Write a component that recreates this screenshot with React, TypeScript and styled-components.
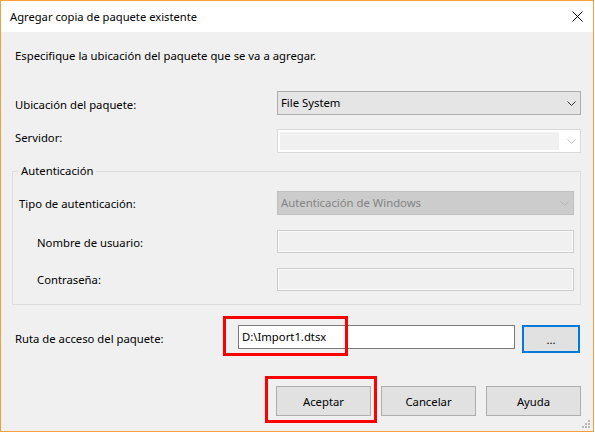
import React from "react";
import styled, { createGlobalStyle } from "styled-components";

const GlobalStyle = createGlobalStyle`
  html, body { margin: 0; padding: 0; background: #ffffff; }
  body { font-family: "Segoe UI", "Noto Sans", "Open Sans", sans-serif; font-size: 11.3px; color: #000; }
  * { box-sizing: border-box; }
`;

const Window = styled.div`
  position: relative;
  width: 594px;
  height: 432px;
  border: 1px solid #f5a038;
  display: flex;
  flex-direction: column;
  background: #f0f0f0;
`;

const TitleBar = styled.div`
  height: 31px;
  background: #ffffff;
  display: flex;
  align-items: center;
  justify-content: space-between;
  padding: 0 10px 0 9px;
  flex-shrink: 0;
`;

const Title = styled.span`
  font-size: 11.2px;
  line-height: 16px;
  margin-top: 1px;
`;

const CloseIcon = styled.svg`
  width: 11px;
  height: 11px;
`;

const Body = styled.div`
  flex: 1;
  display: flex;
  flex-direction: column;
  padding: 16px 12px 0 14px;
`;

const Instruction = styled.div`
  line-height: 16px;
  height: 16px;
  margin-bottom: 27px;
`;

const Row = styled.div<{ $gap?: number; $indent?: number; $align?: string }>`
  display: flex;
  align-items: ${(p) => p.$align || "center"};
  margin-bottom: ${(p) => p.$gap ?? 0}px;
  padding-left: ${(p) => p.$indent ?? 0}px;
`;

const Label = styled.div<{ $w: number; $top?: number }>`
  width: ${(p) => p.$w}px;
  flex-shrink: 0;
  line-height: 16px;
  margin-top: ${(p) => p.$top ?? 0}px;
`;

const Combo = styled.div<{ $variant: "normal" | "empty" | "disabled"; $w: number }>`
  width: ${(p) => p.$w}px;
  height: 24px;
  display: flex;
  align-items: center;
  justify-content: space-between;
  padding: ${(p) => (p.$variant === "empty" ? "2px 4px 2px 2px" : "0 4px 0 3px")};
  line-height: 16px;
  border: 1px solid
    ${(p) => (p.$variant === "normal" ? "#adadad" : p.$variant === "empty" ? "#d9d9d9" : "#bfbfbf")};
  background: ${(p) => (p.$variant === "normal" ? "#e5e5e5" : p.$variant === "empty" ? "#ffffff" : "#cccccc")};
  color: ${(p) => (p.$variant === "disabled" ? "#838383" : "#000000")};
`;

const ComboEdit = styled.div`
  flex: 1;
  align-self: stretch;
  background: #f0f0f0;
  margin-right: 8px;
`;

const Chevron = styled.svg`
  width: 9px;
  height: 5px;
  flex-shrink: 0;
`;

const Group = styled.fieldset`
  margin: 10px 0 20px -3px;
  padding: 12px 6px 13px 6px;
  border: 1px solid #dcdcdc;
  width: 569px;
  min-width: 0;
`;

const Legend = styled.legend`
  margin-left: 0;
  padding: 0 2px;
  line-height: 16px;
  font-size: 11.3px;
`;

const TextBox = styled.div<{ $w: number; $h?: number; $disabled?: boolean }>`
  position: relative;
  width: ${(p) => p.$w}px;
  height: ${(p) => p.$h ?? 23}px;
  border: 1px solid ${(p) => (p.$disabled ? "#cccccc" : "#7a7a7a")};
  background: ${(p) => (p.$disabled ? "#f0f0f0" : "#ffffff")};
  box-shadow: ${(p) => (p.$disabled ? "inset 0 0 0 1px #fafafa" : "none")};
  padding: 0 3px;
  line-height: 20px;
  display: flex;
  align-items: center;
`;

const Highlight = styled.div<{ $l: number; $t: number; $w: number; $h: number }>`
  position: absolute;
  left: ${(p) => p.$l}px;
  top: ${(p) => p.$t}px;
  width: ${(p) => p.$w}px;
  height: ${(p) => p.$h}px;
  border: 3px solid #ff0000;
  pointer-events: none;
`;

const Button = styled.button<{ $focused?: boolean; $w: number; $h: number }>`
  position: relative;
  width: ${(p) => p.$w}px;
  height: ${(p) => p.$h}px;
  border: ${(p) => (p.$focused ? "2px solid #0078d7" : "1px solid #adadad")};
  background: #e1e1e1;
  font-family: inherit;
  font-size: 11.3px;
  color: #000;
  padding: 0;
  flex-shrink: 0;
`;

const ButtonBar = styled.div`
  display: flex;
  justify-content: flex-end;
  gap: 10px;
  margin-top: 33px;
`;

const Grip = styled.svg`
  position: absolute;
  right: 3px;
  bottom: 3px;
  width: 8px;
  height: 8px;
`;

const ChevronIcon = ({ color }: { color: string }) => (
  <Chevron viewBox="0 0 9 5">
    <path d="M0.5 0.5 L4.5 4.5 L8.5 0.5" fill="none" stroke={color} strokeWidth="1" />
  </Chevron>
);

export default function App() {
  return (
    <>
      <GlobalStyle />
      <Window>
        <TitleBar>
          <Title>Agregar copia de paquete existente</Title>
          <CloseIcon viewBox="0 0 11 11">
            <path d="M0.5 0.5 L10.5 10.5 M10.5 0.5 L0.5 10.5" stroke="#000" strokeWidth="1" />
          </CloseIcon>
        </TitleBar>
        <Body>
          <Instruction>Especifique la ubicación del paquete que se va a agregar.</Instruction>
          <Row $gap={14}>
            <Label $w={262} $top={3}>Ubicación del paquete:</Label>
            <Combo $variant="normal" $w={304}>
              <span>File System</span>
              <ChevronIcon color="#333333" />
            </Combo>
          </Row>
          <Row>
            <Label $w={262} $top={-7}>Servidor:</Label>
            <Combo $variant="empty" $w={304}>
              <ComboEdit />
              <ChevronIcon color="#c0c0c0" />
            </Combo>
          </Row>
          <Group>
            <Legend>Autenticación</Legend>
            <Row $gap={15}>
              <Label $w={258} $top={2}>Tipo de autenticación:</Label>
              <Combo $variant="disabled" $w={297}>
                <span>Autenticación de Windows</span>
                <ChevronIcon color="#b5b5b5" />
              </Combo>
            </Row>
            <Row $gap={15} $indent={18}>
              <Label $w={240} $top={2}>Nombre de usuario:</Label>
              <TextBox $w={297} $disabled />
            </Row>
            <Row $indent={18}>
              <Label $w={240} $top={1}>Contraseña:</Label>
              <TextBox $w={297} $disabled />
            </Row>
          </Group>
          <Row $align="flex-start">
            <Label $w={223} $top={6}>Ruta de acceso del paquete:</Label>
            <TextBox $w={277} $h={24}>
              D:\Import1.dtsx
              <Highlight $l={-16} $t={-10} $w={125} $h={40} />
            </TextBox>
            <Button $focused $w={58} $h={28} style={{ marginLeft: 7 }}>
              ...
            </Button>
          </Row>
          <ButtonBar>
            <Button $w={95} $h={30}>
              Aceptar
              <Highlight $l={-12} $t={-11} $w={112} $h={47} />
            </Button>
            <Button $w={95} $h={30}>Cancelar</Button>
            <Button $w={95} $h={30}>Ayuda</Button>
          </ButtonBar>
        </Body>
        <Grip viewBox="0 0 8 8">
          <g fill="#b8b8b8">
            <rect x="6" y="0" width="2" height="2" />
            <rect x="3" y="3" width="2" height="2" />
            <rect x="6" y="3" width="2" height="2" />
            <rect x="0" y="6" width="2" height="2" />
            <rect x="3" y="6" width="2" height="2" />
            <rect x="6" y="6" width="2" height="2" />
          </g>
        </Grip>
      </Window>
    </>
  );
}
